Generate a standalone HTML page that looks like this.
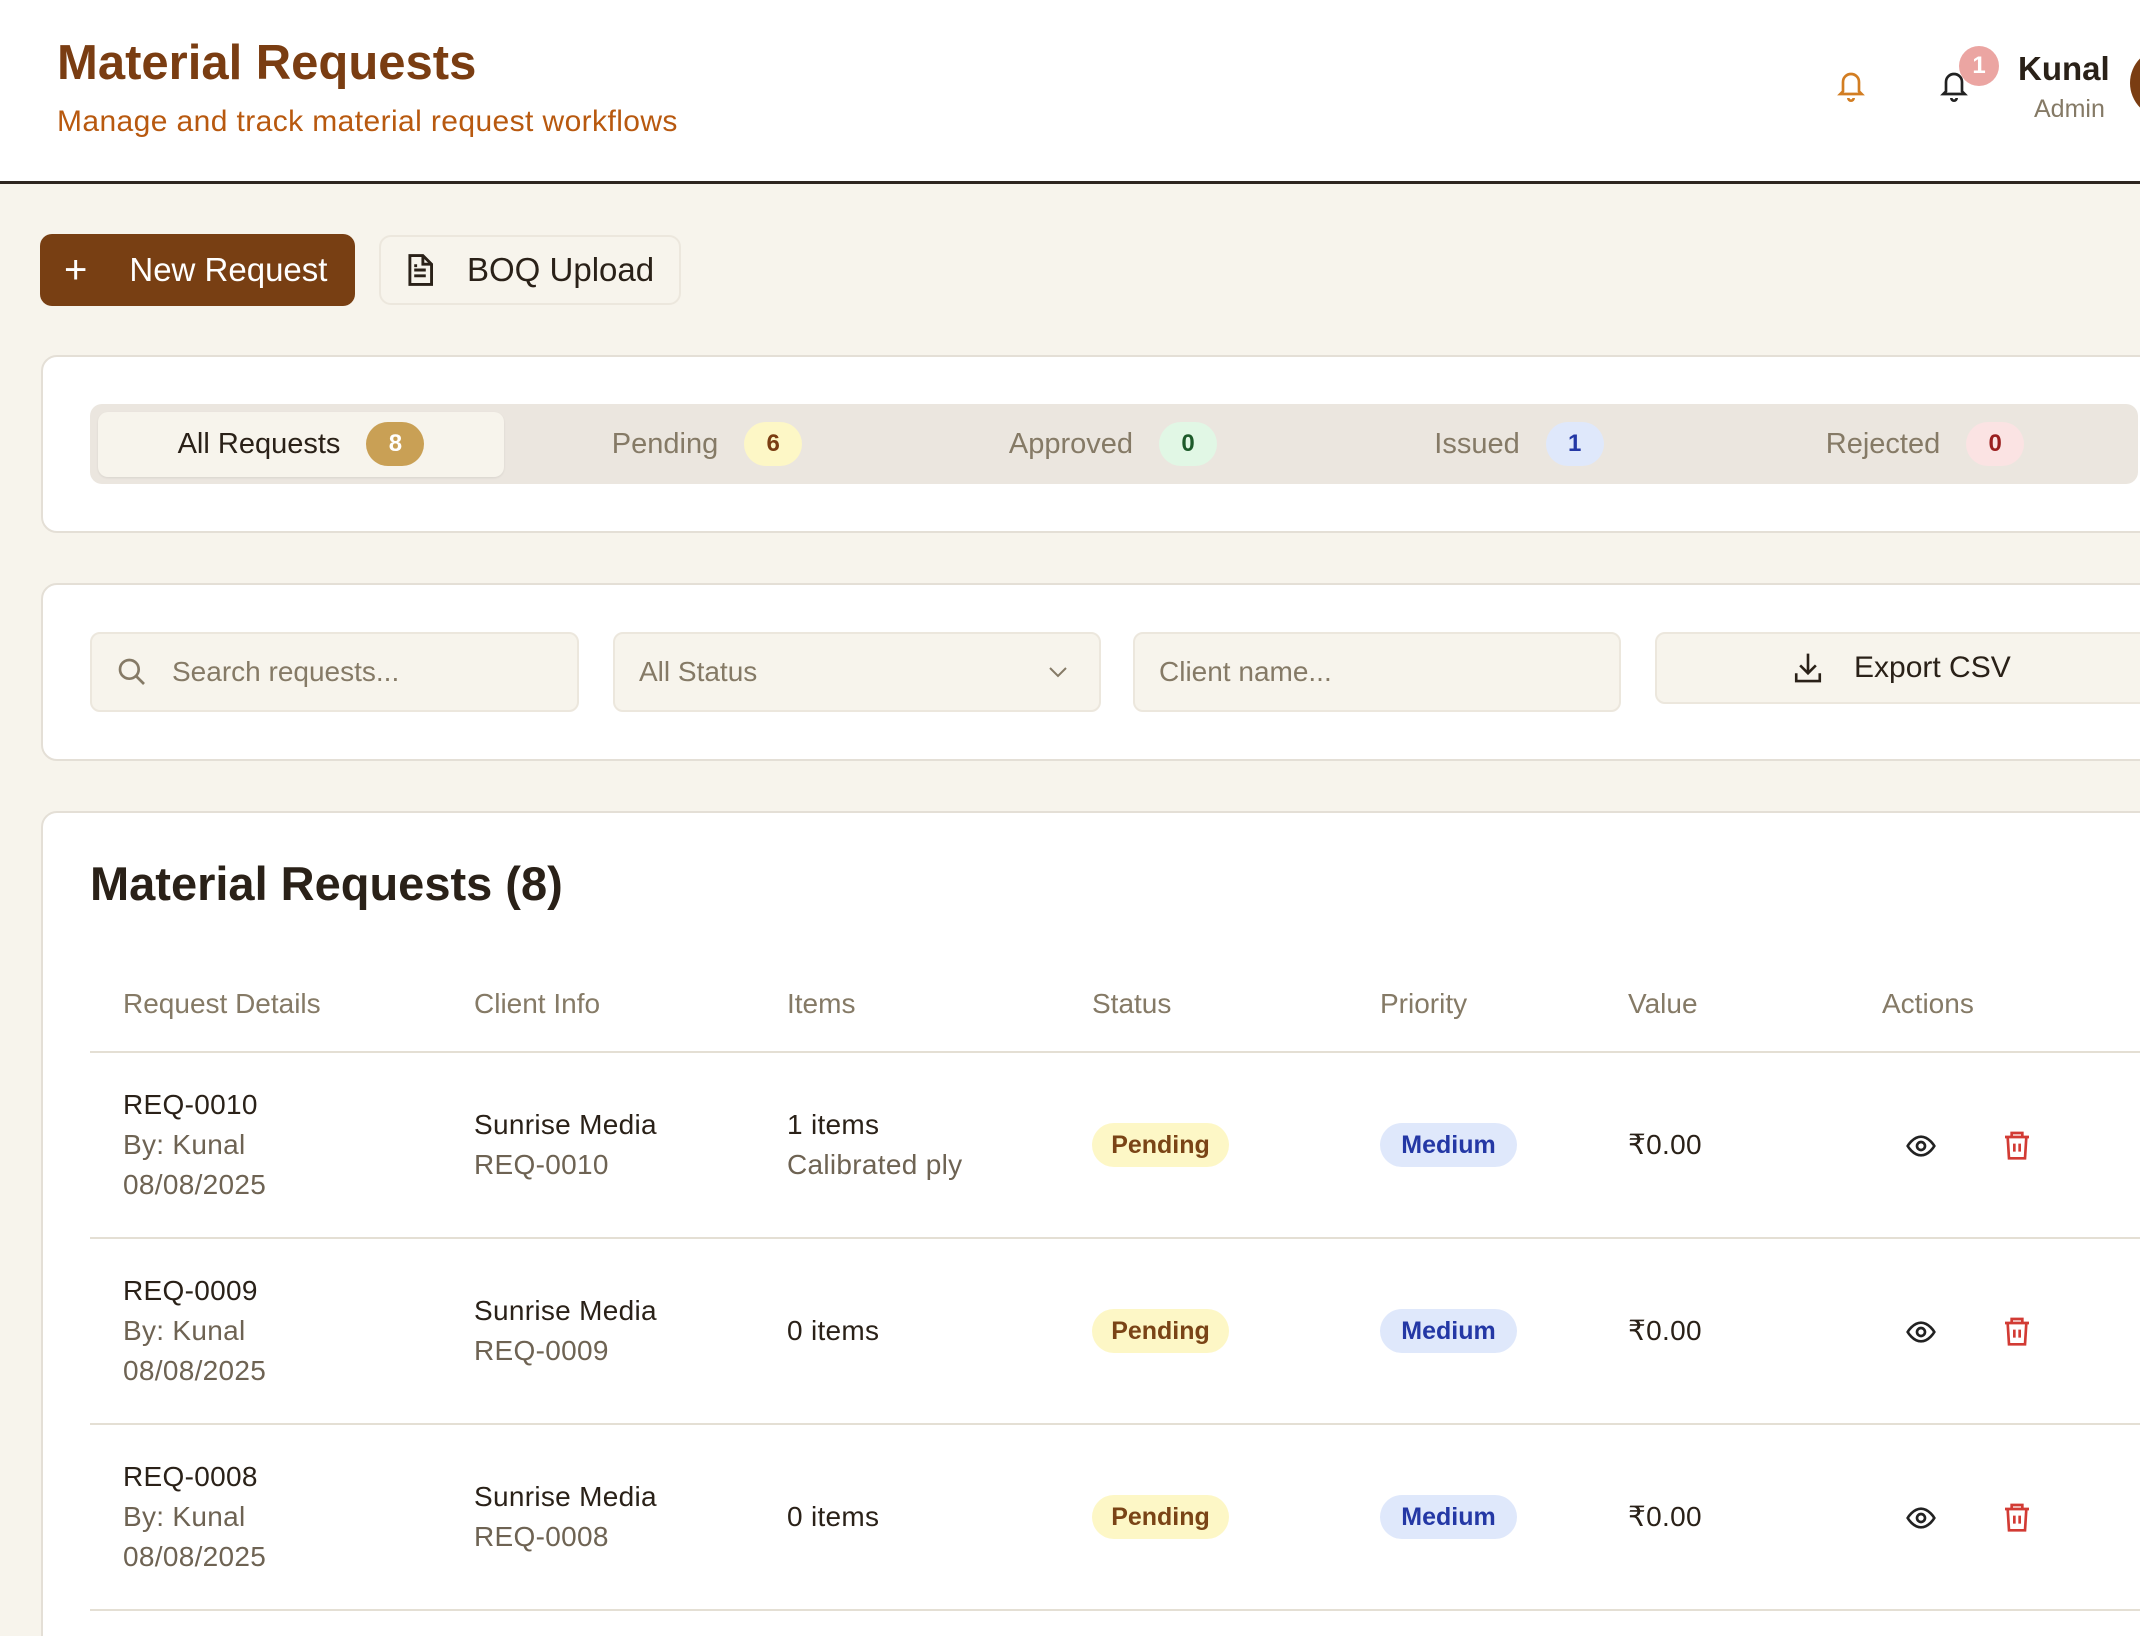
<!DOCTYPE html>
<html><head><meta charset="utf-8"><style>
*{box-sizing:border-box;margin:0;padding:0}
html,body{width:2140px;height:1636px;overflow:hidden}
body{background:#f7f4ec;font-family:"Liberation Sans",sans-serif;position:relative;color:#2a2118}
.a{position:absolute}
.hdr{left:0;top:0;width:2140px;height:184px;background:#fff;border-bottom:3px solid #2e2620}
.card{background:#fff;border:2px solid #e4dfd6;border-radius:16px;left:41px;width:2160px}
.tab{position:absolute;top:0;height:100%;display:flex;align-items:center;justify-content:center;font-size:29px;color:#857a66;gap:26px}
.cnt{display:inline-flex;align-items:center;justify-content:center;height:44px;min-width:58px;border-radius:22px;font-size:24px;font-weight:bold}
.inp{background:#f7f4ec;border:2px solid #ece7dd;border-radius:10px;height:80px;top:632px;font-size:28px;color:#857a66;display:flex;align-items:center}
.th{top:988px;font-size:28px;color:#857a66}
.t{font-size:28px;line-height:40px;letter-spacing:0.3px}
.g{color:#6e6353}
.pill{height:44px;border-radius:22px;font-size:25px;font-weight:bold;display:flex;align-items:center;justify-content:center;width:137px}
.line{left:90px;width:2060px;height:2px;background:#e4dfd4}
</style></head><body>
<div class="a hdr">
 <div class="a" style="left:57px;top:35px;font-size:49px;font-weight:bold;color:#7a3d12">Material Requests</div>
 <div class="a" style="left:57px;top:105px;font-size:30px;letter-spacing:0.4px;color:#b8590f">Manage and track material request workflows</div>
 <svg class="a" style="left:1835px;top:68px" width="32" height="36" viewBox="0 0 24 26" fill="none" stroke="#d27d22" stroke-width="2"><path d="M6 17V10a6 6 0 0 1 12 0v7l2 2H4z"/><path d="M10 22a2 2 0 0 0 4 0"/></svg>
 <svg class="a" style="left:1938px;top:68px" width="32" height="36" viewBox="0 0 24 26" fill="none" stroke="#222" stroke-width="2"><path d="M6 17V10a6 6 0 0 1 12 0v7l2 2H4z"/><path d="M10 22a2 2 0 0 0 4 0"/></svg>
 <div class="a" style="left:1959px;top:46px;width:40px;height:40px;border-radius:20px;background:#eba5a2;color:#fff;font-size:24px;font-weight:bold;display:flex;align-items:center;justify-content:center">1</div>
 <div class="a" style="left:2018px;top:50px;font-size:33px;font-weight:bold;color:#2a2118">Kunal</div>
 <div class="a" style="left:2034px;top:95px;font-size:25px;color:#857a66">Admin</div>
 <div class="a" style="left:2130px;top:48px;width:70px;height:70px;border-radius:35px;background:#7a3d12"></div>
</div>

<div class="a" style="left:40px;top:234px;width:315px;height:72px;border-radius:12px;background:#783f13;color:#fff;font-size:33px;display:flex;align-items:center"><span style="margin-left:24px;font-size:40px;font-weight:300">+</span><span style="margin-left:42px">New Request</span></div>
<div class="a" style="left:379px;top:235px;width:302px;height:70px;border-radius:12px;background:#f7f4ec;border:2px solid #ece7dd;font-size:33px;display:flex;align-items:center">
 <svg style="margin-left:26px" width="26" height="32" viewBox="0 0 18 22" fill="none" stroke="#2a2118" stroke-width="2"><path d="M2 1h9l6 6v14H2z"/><path d="M11 1v6h6M5 11h8M5 15h8M5 8h2"/></svg>
 <span style="margin-left:34px">BOQ Upload</span></div>

<div class="a card" style="top:355px;height:178px"></div>
<div class="a" style="left:90px;top:404px;width:2048px;height:80px;background:#ebe6df;border-radius:12px">
 <div class="a" style="left:8px;top:8px;width:406px;height:65px;background:#f7f4ec;border-radius:10px;box-shadow:0 1px 2px rgba(0,0,0,.08)"></div>
 <div class="tab" style="left:8px;width:406px;color:#2a2118">All Requests<span class="cnt" style="background:#c9a055;color:#fff">8</span></div>
 <div class="tab" style="left:414px;width:406px">Pending<span class="cnt" style="background:#fdf7c6;color:#7a3d12">6</span></div>
 <div class="tab" style="left:820px;width:406px">Approved<span class="cnt" style="background:#e1f7e5;color:#1d5a2a">0</span></div>
 <div class="tab" style="left:1226px;width:406px">Issued<span class="cnt" style="background:#dfe8fb;color:#2438a5">1</span></div>
 <div class="tab" style="left:1632px;width:406px">Rejected<span class="cnt" style="background:#fbe3e3;color:#9a1f1f">0</span></div>
</div>

<div class="a card" style="top:583px;height:178px"></div>
<div class="a inp" style="left:90px;width:489px"><svg style="margin-left:24px" width="32" height="32" viewBox="0 0 24 24" fill="none" stroke="#857a66" stroke-width="2"><circle cx="10" cy="10" r="7"/><path d="M15 15l6 6"/></svg><span style="margin-left:24px">Search requests...</span></div>
<div class="a inp" style="left:613px;width:488px"><span style="margin-left:24px">All Status</span><svg style="position:absolute;right:30px" width="22" height="14" viewBox="0 0 22 14" fill="none" stroke="#857a66" stroke-width="2"><path d="M3 3l8 8 8-8"/></svg></div>
<div class="a inp" style="left:1133px;width:488px"><span style="margin-left:24px">Client name...</span></div>
<div class="a" style="left:1655px;top:632px;width:540px;height:72px;background:#f7f4ec;border:2px solid #ece7dd;border-radius:10px;display:flex;align-items:center;font-size:30px;color:#2a2118">
 <svg style="margin-left:135px" width="32" height="34" viewBox="0 0 24 26" fill="none" stroke="#2a2118" stroke-width="2"><path d="M12 2v15M6 11l6 6 6-6M3 17v6h18v-6"/></svg><span style="margin-left:30px">Export CSV</span></div>

<div class="a card" style="top:811px;height:900px"></div>
<div class="a" style="left:90px;top:856px;font-size:47px;font-weight:bold;color:#2a2118">Material Requests (8)</div>
<div class="a th" style="left:123px">Request Details</div>
<div class="a th" style="left:474px">Client Info</div>
<div class="a th" style="left:787px">Items</div>
<div class="a th" style="left:1092px">Status</div>
<div class="a th" style="left:1380px">Priority</div>
<div class="a th" style="left:1628px">Value</div>
<div class="a th" style="left:1882px">Actions</div>
<div class="a line" style="top:1051px"></div>

<div class="a t" style="left:123px;top:1085px">REQ-0010<br><span class="g">By: Kunal<br>08/08/2025</span></div>
<div class="a t" style="left:474px;top:1105px">Sunrise Media<br><span class="g">REQ-0010</span></div>
<div class="a t" style="left:787px;top:1105px">1 items<br><span class="g">Calibrated ply</span></div>
<div class="a pill" style="left:1092px;top:1123px;background:#fdf7c6;color:#7a4416">Pending</div>
<div class="a pill" style="left:1380px;top:1123px;background:#dfe8fb;color:#2438a5">Medium</div>
<div class="a t" style="left:1628px;top:1125px">₹0.00</div>
<div class="a line" style="top:1237px"></div>

<div class="a t" style="left:123px;top:1271px">REQ-0009<br><span class="g">By: Kunal<br>08/08/2025</span></div>
<div class="a t" style="left:474px;top:1291px">Sunrise Media<br><span class="g">REQ-0009</span></div>
<div class="a t" style="left:787px;top:1311px">0 items</div>
<div class="a pill" style="left:1092px;top:1309px;background:#fdf7c6;color:#7a4416">Pending</div>
<div class="a pill" style="left:1380px;top:1309px;background:#dfe8fb;color:#2438a5">Medium</div>
<div class="a t" style="left:1628px;top:1311px">₹0.00</div>
<div class="a line" style="top:1423px"></div>

<div class="a t" style="left:123px;top:1457px">REQ-0008<br><span class="g">By: Kunal<br>08/08/2025</span></div>
<div class="a t" style="left:474px;top:1477px">Sunrise Media<br><span class="g">REQ-0008</span></div>
<div class="a t" style="left:787px;top:1497px">0 items</div>
<div class="a pill" style="left:1092px;top:1495px;background:#fdf7c6;color:#7a4416">Pending</div>
<div class="a pill" style="left:1380px;top:1495px;background:#dfe8fb;color:#2438a5">Medium</div>
<div class="a t" style="left:1628px;top:1497px">₹0.00</div>
<div class="a line" style="top:1609px"></div>

<svg width="0" height="0" style="position:absolute"><defs>
<symbol id="eye" viewBox="0 0 24 24"><path d="M2 12s4-7 10-7 10 7 10 7-4 7-10 7S2 12 2 12z" fill="none" stroke="#222" stroke-width="2"/><circle cx="12" cy="12" r="3" fill="none" stroke="#222" stroke-width="2"/></symbol>
<symbol id="trash" viewBox="0 0 24 24"><path d="M3 6h18M8 6V3h8v3M5 6l1 16h12l1-16M10 11v6M14 11v6" fill="none" stroke="#d23b34" stroke-width="2"/></symbol>
</defs></svg>
<svg class="a" style="left:1905px;top:1130px" width="32" height="32"><use href="#eye"/></svg>
<svg class="a" style="left:2001px;top:1129px" width="32" height="32"><use href="#trash"/></svg>
<svg class="a" style="left:1905px;top:1316px" width="32" height="32"><use href="#eye"/></svg>
<svg class="a" style="left:2001px;top:1315px" width="32" height="32"><use href="#trash"/></svg>
<svg class="a" style="left:1905px;top:1502px" width="32" height="32"><use href="#eye"/></svg>
<svg class="a" style="left:2001px;top:1501px" width="32" height="32"><use href="#trash"/></svg>
</body></html>
